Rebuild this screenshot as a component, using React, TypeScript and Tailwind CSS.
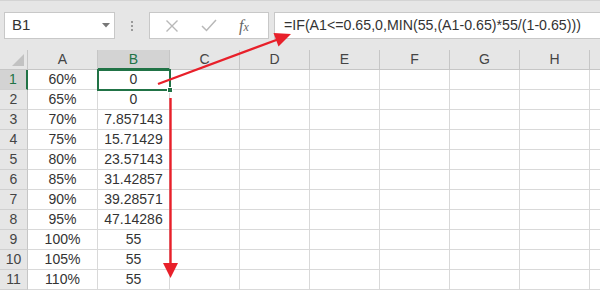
const cols = ['A', 'B', 'C', 'D', 'E', 'F', 'G', 'H', ''];
const widths = ['w-[70px]', 'w-[72px]', 'w-[70px]', 'w-[70px]', 'w-[70px]', 'w-[70px]', 'w-[70px]', 'w-[70px]', 'w-[40px]'];

const rows = [
  ['60%', '0'],
  ['65%', '0'],
  ['70%', '7.857143'],
  ['75%', '15.71429'],
  ['80%', '23.57143'],
  ['85%', '31.42857'],
  ['90%', '39.28571'],
  ['95%', '47.14286'],
  ['100%', '55'],
  ['105%', '55'],
  ['110%', '55'],
];

const App = () => {
  return (
    <div className="relative w-[600px] h-[291px] overflow-hidden bg-white font-['Liberation_Sans',Arial,sans-serif] text-[#333]">
      {/* formula bar */}
      <div className="h-[50px] bg-[#e6e6e6] border-t border-[#d4d4d4] flex items-start pt-[11px]">
        <div className="ml-[4px] w-[111px] h-[27px] shrink-0 bg-white border border-[#c8c8c8] flex items-center justify-between pl-[7px] pr-[4px] text-[15px] text-[#333]">
          <span>B1</span>
          <svg width="8" height="5" viewBox="0 0 8 5"><path d="M0 0h8L4 4.5z" fill="#777" /></svg>
        </div>
        <div className="w-[34px] h-[27px] shrink-0 flex flex-col items-center justify-center gap-[2px]">
          <span className="w-[2px] h-[2px] bg-[#9a9a9a]" />
          <span className="w-[2px] h-[2px] bg-[#9a9a9a]" />
          <span className="w-[2px] h-[2px] bg-[#9a9a9a]" />
        </div>
        <div className="w-[120px] h-[27px] shrink-0 bg-white border border-[#c8c8c8] flex items-center">
          <svg className="ml-[15px]" width="14" height="14" viewBox="0 0 14 14">
            <path d="M1.5 1.5l11 11M12.5 1.5l-11 11" stroke="#b8b8b8" strokeWidth="1.4" />
          </svg>
          <svg className="ml-[22px]" width="16" height="13" viewBox="0 0 16 13">
            <path d="M1 7l4.5 4.5L15 1" stroke="#b8b8b8" strokeWidth="1.5" fill="none" />
          </svg>
          <span className="ml-[22px] font-['Liberation_Serif',serif] italic text-[16px] text-[#666]">f<span className="text-[12px]">x</span></span>
        </div>
        <div className="ml-[5px] flex-1 h-[27px] bg-white border border-r-0 border-[#c8c8c8] flex items-center pl-[9px] text-[14.2px] text-[#333] whitespace-nowrap">
          =IF(A1&lt;=0.65,0,MIN(55,(A1-0.65)*55/(1-0.65)))
        </div>
      </div>

      {/* column headers */}
      <div className="flex h-[20px] bg-[#e6e6e6] text-[14px] text-[#444]">
        <div className="w-[28px] shrink-0 border-r border-b border-[#c6c6c6] flex items-end justify-end pr-[3px] pb-[3px]">
          <svg width="12" height="12" viewBox="0 0 12 12"><path d="M12 0v12H0z" fill="#c2c2c2" /></svg>
        </div>
        {cols.map((c, i) => (
          <div
            key={i}
            className={`${widths[i]} shrink-0 flex items-center justify-center border-r ${
              c === 'B'
                ? 'bg-[#d3d3d3] text-[#217346] border-b-2 border-b-[#217346] border-r-[#c6c6c6]'
                : 'border-b border-[#c6c6c6]'
            }`}
          >
            {c}
          </div>
        ))}
      </div>

      {/* rows */}
      {rows.map((r, ri) => (
        <div key={ri} className="flex h-[20px] text-[14px]">
          <div
            className={`w-[28px] shrink-0 flex items-center justify-center border-b border-[#d0d0d0] ${
              ri === 0
                ? 'bg-[#d3d3d3] text-[#217346] border-r-2 border-r-[#217346]'
                : 'bg-[#e6e6e6] text-[#444] border-r border-r-[#c6c6c6]'
            }`}
          >
            {ri + 1}
          </div>
          {cols.map((_, ci) => (
            <div key={ci} className={`${widths[ci]} shrink-0 flex items-center justify-center border-r border-b border-[#d9d9d9]`}>
              {ci < 2 ? r[ci] : ''}
            </div>
          ))}
        </div>
      ))}

      {/* selection B1 */}
      <div className="absolute left-[97px] top-[69px] w-[74px] h-[22px] border-2 border-[#217346]" />
      <div className="absolute left-[167px] top-[87px] w-[6px] h-[6px] bg-[#217346] border border-white" />

      {/* arrows */}
      <svg className="absolute left-0 top-0 pointer-events-none" width="600" height="291" viewBox="0 0 600 291">
        <line x1="158" y1="84" x2="279" y2="39" stroke="#e8202a" strokeWidth="2.4" />
        <polygon points="291,34 278.5,46.5 273.5,33" fill="#e8202a" />
        <line x1="170.5" y1="98" x2="170.5" y2="265" stroke="#e8202a" strokeWidth="2.4" />
        <polygon points="163,263 178,263 170.5,278" fill="#e8202a" />
      </svg>
    </div>
  );
};

export default App;
